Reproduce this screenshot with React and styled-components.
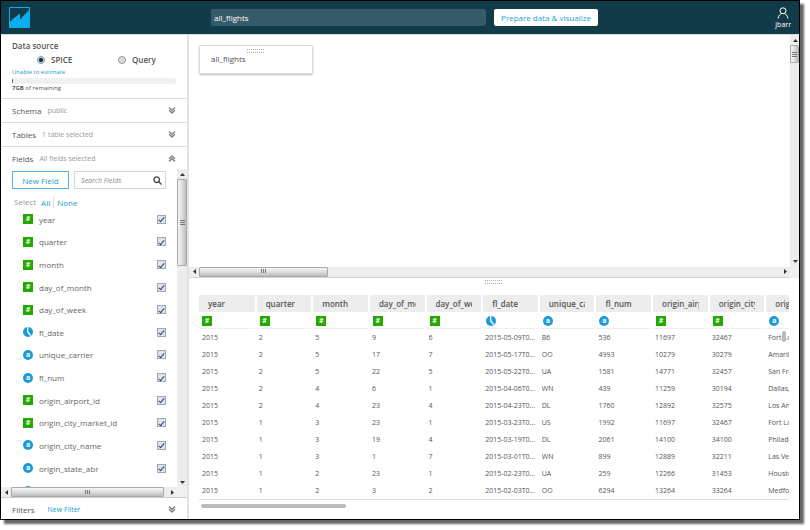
import React from "react";
import styled, { createGlobalStyle, css } from "styled-components";

const GlobalStyle = createGlobalStyle`
  *, *::before, *::after { box-sizing: border-box; }
  body { margin: 0; background: #fff; }
  body, button, input { font-family: "Open Sans", "Noto Sans", sans-serif; font-size: 8px; color: #555; }
`;

const Page = styled.div`
  height: 100vh;
  padding: 0 10px 10px 0;
`;
const Window = styled.div`
  height: 100%;
  display: flex;
  flex-direction: column;
  border: 1px solid #000;
  background: #fff;
  box-shadow: 4px 4px 2px #666;
`;

/* Header */
const Header = styled.header`
  display: flex;
  align-items: center;
  height: 34px;
  flex: none;
  padding: 0 8px;
  background: #123b4a;
  border-bottom: 1px solid #d3dbe2;
`;
const LogoLink = styled.a`
  display: block;
  width: 202px;
  height: 21px;
`;
const TitleInput = styled.input`
  width: 275px;
  height: 17px;
  padding: 0 3px;
  border: 0;
  border-radius: 2px;
  background: #365a69;
  color: #fff;
`;
const PrepareButton = styled.button`
  height: 17px;
  width: 104px;
  margin-left: 8px;
  padding: 0;
  border: 0;
  border-radius: 2px;
  background: #fff;
  color: #2a9fd0;
`;
const User = styled.button`
  display: flex;
  flex-direction: column;
  align-items: center;
  margin-left: auto;
  padding: 2px 0 0;
  border: 0;
  background: none;
  color: #fff;
  font-size: 7px;
  line-height: 12px;
`;

const Body = styled.div`
  display: grid;
  grid-template-columns: 186px 2px minmax(0, 1fr);
  flex: 1;
  min-height: 0;
`;
const Splitter = styled.div`
  background: #e2e2e2;
`;

/* Sidebar */
const Sidebar = styled.aside`
  display: flex;
  flex-direction: column;
  min-width: 0;
  min-height: 0;
`;
const Source = styled.fieldset`
  flex: none;
  min-width: 0;
  height: 64px;
  margin: 0;
  padding: 4px 11px 0;
  border: 0;
  border-bottom: 1px solid #ddd;
`;
const SourceTitle = styled.div`
  font-weight: 600;
  line-height: 14px;
`;
const Options = styled.div`
  display: flex;
  padding-left: 25px;
  line-height: 14px;
`;
const Option = styled.label`
  display: flex;
  align-items: center;
  gap: 6px;
  flex: 0 0 81px;
  font-weight: 600;
  &:last-child { flex: 1; }
`;
const Radio = styled.input`
  appearance: none;
  width: 8px;
  height: 8px;
  margin: 0;
  border: 1px solid #8e8f8f;
  border-radius: 50%;
  background: radial-gradient(#ccc, #f4f4f4);
  &:checked { background: radial-gradient(circle, #12364f 40%, #9cc7de 55%, #fff 75%); }
`;
const Estimate = styled.a`
  display: block;
  color: #1a9bd0;
  font-size: 6px;
  line-height: 11px;
  text-decoration: none;
`;
const Meter = styled.div`
  height: 6px;
  border-radius: 3px;
  background: #f0f0f0;
  overflow: hidden;
  &::before { content: ""; display: block; width: 1px; height: 6px; background: #555; }
`;
const Remaining = styled.div`
  font-size: 6px;
  line-height: 9px;
`;
const Section = styled.button`
  flex: none;
  display: flex;
  align-items: center;
  gap: 6px;
  height: ${(p) => p.$height || 24}px;
  padding: 0 11px;
  border: 0;
  border-bottom: ${(p) => (p.$open ? 0 : "1px solid #ddd")};
  background: none;
  text-align: left;
`;
const SectionNote = styled.span`
  flex: 1;
  color: #999;
  font-size: 7px;
`;
const FilterBar = styled.div`
  flex: none;
  display: flex;
  align-items: center;
  gap: 13px;
  height: 22px;
  padding: 2px 11px 0;
  border-top: 1px solid #ccc;
`;
const TextButton = styled.button`
  padding: 0;
  border: 0;
  background: none;
  color: #1a9bd0;
  font-size: ${(p) => (p.$small ? 7 : 8)}px;
  line-height: 11px;
`;
const ToggleButton = styled(TextButton)`
  display: flex;
  margin-left: auto;
`;
const Fields = styled.div`
  flex: 1;
  min-height: 0;
  display: grid;
  grid-template-columns: minmax(0, 1fr) 10px;
  grid-template-rows: minmax(0, 1fr) 10px;
`;
const FieldsPane = styled.div`
  overflow: hidden;
`;
const Tools = styled.div`
  display: flex;
  gap: 5px;
  padding: 2px 11px 0;
`;
const NewField = styled.button`
  flex: none;
  width: 57px;
  height: 18px;
  padding: 0;
  border: 1px solid #4db5df;
  background: #fff;
  color: #1a9bd0;
`;
const SearchBox = styled.label`
  display: flex;
  align-items: center;
  flex: 1;
  min-width: 0;
  height: 18px;
  padding: 0 3px 0 6px;
  border: 1px solid #d5d5d5;
`;
const SearchInput = styled.input`
  flex: 1;
  min-width: 0;
  padding: 0;
  border: 0;
  background: none;
  font-size: 7px;
  font-style: italic;
  &::placeholder { color: #888; opacity: 1; }
`;
const SelectRow = styled.div`
  display: flex;
  align-items: center;
  gap: 5px;
  padding: 7px 13px 0;
  color: #999;
  line-height: 12px;
`;
const SelectNone = styled(TextButton)`
  padding-left: 3px;
  margin-left: -2px;
  border-left: 1px solid #ddd;
`;
const FieldList = styled.ul`
  display: grid;
  grid-template-rows: repeat(13, minmax(0, 1fr));
  height: 294px;
  margin: 0;
  padding: 0 11px 0 22px;
  list-style: none;
`;
const FieldRow = styled.li`
  display: flex;
  align-items: center;
`;
const FieldLabel = styled.label`
  display: flex;
  align-items: center;
  flex: 1;
  gap: 6px;
  color: #666;
`;
const FieldName = styled.span`
  flex: 1;
`;
const Check = styled.input`
  appearance: none;
  display: grid;
  place-items: center;
  width: 9px;
  height: 9px;
  margin: 0;
  border: 1px solid #a5a6a6;
  background: #dfe4ec;
  &:checked::after {
    content: "";
    width: 3px;
    height: 6px;
    border: solid #2b3f8c;
    border-width: 0 1px 1px 0;
    transform: rotate(40deg);
  }
`;

const Badge = styled.span`
  display: flex;
  align-items: center;
  justify-content: center;
  width: 10px;
  height: 10px;
  flex: none;
  border-radius: ${(p) => (p.$round ? "50%" : "0")};
  background: ${(p) => (p.$round ? "#1a9bd7" : "#24a900")};
  color: #fff;
  font-size: 7px;
  font-weight: 700;
  line-height: 10px;
`;
const ClockSvg = styled.svg`
  display: block;
  flex: none;
`;

/* Scrollbars */
const Bar = styled.div`
  display: flex;
  flex-direction: ${(p) => (p.$vertical ? "column" : "row")};
  background: #ededed;
  ${(p) => p.$line && css`border-bottom: 1px solid #d5d5d5;`}
`;
const Arrow = styled.span`
  display: flex;
  align-items: center;
  justify-content: center;
  flex: none;
  width: 10px;
  height: 10px;
`;
const Thumb = styled.span`
  display: flex;
  align-items: center;
  justify-content: center;
  flex: 0 0 ${(p) => p.$size}px;
  border: 1px solid #aaa;
  border-radius: 1px;
  background: linear-gradient(${(p) => (p.$vertical ? "to right" : "to bottom")}, #f5f5f5, #dedede 50%, #bcbcbc);
`;
const Space = styled.span`
  flex: 1;
`;
const Corner = styled.div`
  background: #f0f0f0;
`;

/* Main area */
const Main = styled.main`
  display: flex;
  flex-direction: column;
  min-width: 0;
  min-height: 0;
`;
const CanvasGrid = styled.section`
  flex: 1;
  min-height: 0;
  display: grid;
  grid-template-columns: minmax(0, 1fr) 9px;
  grid-template-rows: minmax(0, 1fr) 11px;
`;
const Canvas = styled.div`
  padding: 10px;
`;
const Card = styled.div`
  width: 114px;
  height: 29px;
  padding: 3px 11px 0;
  border: 1px solid #ddd;
  border-radius: 2px;
  box-shadow: 0 1px 2px #bbb;
`;
const Grip = styled.div`
  width: 18px;
  height: 4px;
  margin: 0 auto;
  background: repeating-linear-gradient(to right, #aaa 0 1px, transparent 1px 2px);
  mask: linear-gradient(#000 0 1px, transparent 1px 3px, #000 3px 4px);
`;
const CardName = styled.div`
  line-height: 12px;
`;
const Preview = styled.section`
  flex: none;
  padding: 2px 10px 11px;
`;
const TableWrap = styled.div`
  position: relative;
  overflow: hidden;
  margin-top: 11px;
  border-bottom: 1px solid #ddd;
`;
const Table = styled.table`
  width: 624px;
  table-layout: fixed;
  border-collapse: collapse;
`;
const HeadCell = styled.th`
  height: 17px;
  padding: 0 9px;
  border-right: 2px solid #fff;
  background: #ededed;
  font-size: 8px;
  font-weight: 600;
  line-height: 17px;
  text-align: left;
`;
const Clip = styled.span`
  display: block;
  overflow: hidden;
  white-space: nowrap;
`;
const TypeCell = styled.td`
  height: 17px;
  padding: 3px 3px 0;
  border-right: 2px solid #fff;
  border-bottom: 1px solid #eee;
`;
const Cell = styled.td`
  height: 17px;
  padding: 0 0 0 3px;
  font-size: 7px;
  line-height: 17px;
  white-space: nowrap;
`;
const RowScroll = styled.span`
  position: absolute;
  top: 36px;
  right: 3px;
  width: 4px;
  height: 11px;
  border-radius: 2px;
  background: #bbb;
`;
const SlimThumb = styled.div`
  width: 145px;
  height: 4px;
  margin: 4px 2px 0;
  border-radius: 2px;
  background: #bbb;
`;

function Logo() {
  return (
    <svg width="21" height="21" viewBox="0 0 21 21" aria-hidden="true">
      <rect width="21" height="21" rx="1" fill="#08aeef" />
      <path d="M1 1h19v2L11 12.5V6.5L5 11 1 15z" fill="#123b4a" />
    </svg>
  );
}

function TypeIcon({ type }) {
  if (type === "date") {
    return (
      <ClockSvg width="10" height="10" viewBox="0 0 10 10" aria-hidden="true">
        <circle cx="5" cy="5" r="5" fill="#1a9bd7" />
        <path d="M4.7 0V5L7.7 8.5" fill="none" stroke="#fff" strokeWidth="1.3" />
      </ClockSvg>
    );
  }
  return <Badge $round={type === "a"}>{type}</Badge>;
}

function Chevrons({ up }) {
  return (
    <svg width="8" height="7" viewBox="0 0 8 7" fill="none" stroke="#888" strokeWidth="1.5" aria-hidden="true">
      <path d={up ? "M1 3.8 4 1.1 7 3.8M1 6.4 4 3.7 7 6.4" : "M1 .6 4 3.3 7 .6M1 3.2 4 5.9 7 3.2"} />
    </svg>
  );
}

const arrowPaths = {
  up: "M0 4 2.5 1 5 4z",
  down: "M0 1 2.5 4 5 1z",
  left: "M4 0 1 2.5 4 5z",
  right: "M1 0 4 2.5 1 5z",
};

function ArrowIcon({ dir }) {
  return (
    <Arrow>
      <svg width="5" height="5" viewBox="0 0 5 5" aria-hidden="true"><path d={arrowPaths[dir]} fill="#333" /></svg>
    </Arrow>
  );
}

function ScrollBar({ vertical, size, line }) {
  return (
    <Bar $vertical={vertical} $line={line} aria-hidden="true">
      <ArrowIcon dir={vertical ? "up" : "left"} />
      <Thumb $vertical={vertical} $size={size}>
        <svg width="5" height="5" viewBox="0 0 5 5" stroke="#777">
          <path d={vertical ? "M0 .5h5M0 2.5h5M0 4.5h5" : "M.5 0v4M2.5 0v4M4.5 0v4"} />
        </svg>
      </Thumb>
      <Space />
      <ArrowIcon dir={vertical ? "down" : "right"} />
    </Bar>
  );
}

const fields = [
  ["year", "#"], ["quarter", "#"], ["month", "#"], ["day_of_month", "#"], ["day_of_week", "#"],
  ["fl_date", "date"], ["unique_carrier", "a"], ["fl_num", "a"], ["origin_airport_id", "#"],
  ["origin_city_market_id", "#"], ["origin_city_name", "a"], ["origin_state_abr", "a"],
];
const columns = fields.slice(0, 11);

const rows = [
  ["2015", "2", "5", "9", "6", "2015-05-09T0...", "B6", "536", "11697", "32467", "Fort Lauderdale"],
  ["2015", "2", "5", "17", "7", "2015-05-17T0...", "OO", "4993", "10279", "30279", "Amarillo"],
  ["2015", "2", "5", "22", "5", "2015-05-22T0...", "UA", "1581", "14771", "32457", "San Francisco"],
  ["2015", "2", "4", "6", "1", "2015-04-06T0...", "WN", "439", "11259", "30194", "Dallas, TX"],
  ["2015", "2", "4", "23", "4", "2015-04-23T0...", "DL", "1760", "12892", "32575", "Los Angeles"],
  ["2015", "1", "3", "23", "1", "2015-03-23T0...", "US", "1992", "11697", "32467", "Fort Lauderdale"],
  ["2015", "1", "3", "19", "4", "2015-03-19T0...", "DL", "2061", "14100", "34100", "Philadelphia"],
  ["2015", "1", "3", "1", "7", "2015-03-01T0...", "WN", "899", "12889", "32211", "Las Vegas"],
  ["2015", "1", "2", "23", "1", "2015-02-23T0...", "UA", "259", "12266", "31453", "Houston"],
  ["2015", "1", "2", "3", "2", "2015-02-03T0...", "OO", "6294", "13264", "33264", "Medford"],
];

export default function App() {
  return (
    <Page>
      <GlobalStyle />
      <Window>
        <Header>
          <LogoLink href="#" aria-label="Home"><Logo /></LogoLink>
          <TitleInput aria-label="Data set name" defaultValue="all_flights" />
          <PrepareButton>Prepare data &amp; visualize</PrepareButton>
          <User>
            <svg width="12" height="12" viewBox="0 0 12 12" fill="none" stroke="#fff" aria-hidden="true">
              <circle cx="6" cy="3.8" r="3" />
              <path d="M1.2 11.5C1.4 8.5 3 7 4.7 6.6M10.8 11.5C10.6 8.5 9 7 7.3 6.6" />
            </svg>
            jbarr
          </User>
        </Header>
        <Body>
          <Sidebar>
            <Source>
              <SourceTitle>Data source</SourceTitle>
              <Options>
                <Option><Radio type="radio" name="source" defaultChecked />SPICE</Option>
                <Option><Radio type="radio" name="source" />Query</Option>
              </Options>
              <Estimate href="#">Unable to estimate</Estimate>
              <Meter />
              <Remaining><b>7GB</b> of remaining</Remaining>
            </Source>
            <Section>Schema <SectionNote>public</SectionNote><Chevrons /></Section>
            <Section>Tables <SectionNote>1 table selected</SectionNote><Chevrons /></Section>
            <Section $open $height={22}>Fields <SectionNote>All fields selected</SectionNote><Chevrons up /></Section>
            <Fields>
              <FieldsPane>
                <Tools>
                  <NewField>New Field</NewField>
                  <SearchBox>
                    <SearchInput placeholder="Search Fields" aria-label="Search Fields" />
                    <svg width="9" height="9" viewBox="0 0 9 9" fill="none" stroke="#444" strokeWidth="1.3" aria-hidden="true">
                      <circle cx="3.7" cy="3.7" r="2.8" /><path d="m5.8 5.8 2.7 2.7" />
                    </svg>
                  </SearchBox>
                </Tools>
                <SelectRow>
                  Select <TextButton>All</TextButton><SelectNone>None</SelectNone>
                </SelectRow>
                <FieldList>
                  {fields.map(([name, type]) => (
                    <FieldRow key={name}>
                      <FieldLabel>
                        <TypeIcon type={type} />
                        <FieldName>{name}</FieldName>
                        <Check type="checkbox" defaultChecked />
                      </FieldLabel>
                    </FieldRow>
                  ))}
                  <FieldRow><Badge $round /></FieldRow>
                </FieldList>
              </FieldsPane>
              <ScrollBar vertical size={87} />
              <ScrollBar size={153} />
              <Corner />
            </Fields>
            <FilterBar>
              Filters <TextButton $small>New Filter</TextButton>
              <ToggleButton aria-label="Expand filters"><Chevrons /></ToggleButton>
            </FilterBar>
          </Sidebar>
          <Splitter />
          <Main>
            <CanvasGrid>
              <Canvas>
                <Card><Grip /><CardName>all_flights</CardName></Card>
              </Canvas>
              <ScrollBar vertical size={18} />
              <ScrollBar size={129} line />
              <Corner />
            </CanvasGrid>
            <Preview>
              <Grip />
              <TableWrap>
                <Table>
                  <thead>
                    <tr>
                      {columns.map(([name]) => (
                        <HeadCell key={name} scope="col"><Clip>{name}</Clip></HeadCell>
                      ))}
                    </tr>
                  </thead>
                  <tbody>
                    <tr>
                      {columns.map(([name, type]) => (
                        <TypeCell key={name}><TypeIcon type={type} /></TypeCell>
                      ))}
                    </tr>
                    {rows.map((row) => (
                      <tr key={row[5]}>
                        {row.map((value, i) => <Cell key={i}><Clip>{value}</Clip></Cell>)}
                      </tr>
                    ))}
                  </tbody>
                </Table>
                <RowScroll />
              </TableWrap>
              <SlimThumb />
            </Preview>
          </Main>
        </Body>
      </Window>
    </Page>
  );
}
